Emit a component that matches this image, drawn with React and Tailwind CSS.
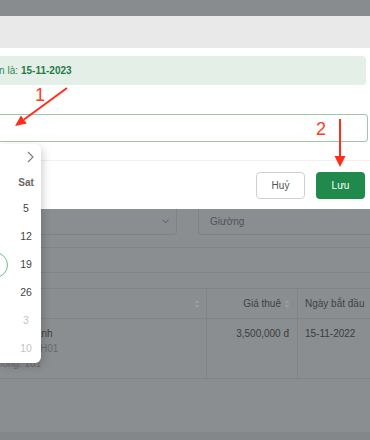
const days = [
  { d: "5", muted: false },
  { d: "12", muted: false },
  { d: "19", muted: false },
  { d: "26", muted: false },
  { d: "3", muted: true },
  { d: "10", muted: true },
];

function SortIcon() {
  return (
    <svg width="6" height="10" viewBox="0 0 6 10" className="shrink-0">
      <path d="M3 1 L5.5 4 H0.5 Z" fill="#9b9ea1" />
      <path d="M3 9 L5.5 6 H0.5 Z" fill="#9b9ea1" />
    </svg>
  );
}

function DatePopup() {
  return (
    <div className="absolute left-0 top-[144px] h-[219px] w-[41px] rounded-r-md bg-white shadow-[2px_3px_8px_rgba(0,0,0,0.18)]">
      <span className="absolute left-[-18px] top-[108px] h-[26px] w-[26px] rounded-full border border-[#6cbf86]" />
      <div className="flex h-[26px] items-center pl-[27px]">
        <svg width="7" height="12" viewBox="0 0 7 12">
          <path d="M1 1 L6 6 L1 11" fill="none" stroke="#777" strokeWidth="1.1" />
        </svg>
      </div>
      <div className="ml-[11px] w-[30px]">
        <div className="flex h-[25px] items-center justify-center text-[10px] font-bold text-[#666]">Sat</div>
        {days.map((x) => (
          <div
            key={x.d}
            className={`flex h-[28px] items-center justify-center text-[10.5px] ${x.muted ? "text-[#c4c4c4]" : "text-[#444]"}`}
          >
            {x.d}
          </div>
        ))}
      </div>
    </div>
  );
}

function Arrows() {
  return (
    <>
      <svg className="pointer-events-none absolute left-0 top-0" width="370" height="440">
        <line x1="67" y1="88" x2="24" y2="119.5" stroke="#ff2d1a" strokeWidth="2" />
        <polygon points="15,126 26.8,123.5 20.9,115.5" fill="#ff2d1a" />
        <line x1="340" y1="119" x2="340" y2="157" stroke="#ff2d1a" strokeWidth="2" />
        <polygon points="340,167 334.5,156 345.5,156" fill="#ff2d1a" />
      </svg>
      <span className="absolute left-[35px] top-[86px] text-[18px] leading-none text-[#ff3b26]">1</span>
      <span className="absolute left-[316px] top-[120px] text-[18px] leading-none text-[#ff3b26]">2</span>
    </>
  );
}

export default function App() {
  return (
    <div className="relative h-[440px] w-[370px] overflow-hidden bg-[#8b8e91] font-['Liberation_Sans',Arial,sans-serif]">
      <div className="h-4 bg-[#898c8f]" />

      {/* modal */}
      <div className="bg-white">
        <div className="h-8 bg-[#e9e9e9]" />
        <div className="pt-2 pb-[18px]">
          <div className="mr-[4px] flex h-[29px] items-center rounded-r bg-[#e4efe8] text-[10px] text-[#2f8753]">
            <div className="flex w-[18px] shrink-0 justify-end">
              <span className="shrink-0 whitespace-nowrap font-medium">Ngày bắt đầu hợp đồng gia hạn là:</span>
            </div>
            <span className="ml-[3px] font-bold text-[#1f7a46]">15-11-2023</span>
          </div>
          <div className="mr-[2px] mt-[29px] h-[28px] rounded-r border border-l-0 border-[#9ccaa9]" />
        </div>
        <div className="flex justify-end gap-[11px] border-t border-[#f0f0f0] pt-[11px] pb-[10px] pr-[5px]">
          <button className="h-[27px] w-[49px] rounded border border-[#cfcfcf] bg-white text-[10px] text-[#555]">Huỷ</button>
          <button className="h-[27px] w-[49px] rounded bg-[#1f8a4c] text-[10px] text-white">Lưu</button>
        </div>
      </div>

      {/* page under the mask */}
      <div className="flex h-[26px] gap-[21px]">
        <div className="flex w-[177px] items-center justify-end rounded-br border-b border-r border-[#7f8285] pr-[7px]">
          <svg width="7" height="5" viewBox="0 0 7 5">
            <path d="M0.5 0.8 L3.5 3.8 L6.5 0.8" fill="none" stroke="#555" strokeWidth="1" />
          </svg>
        </div>
        <div className="flex flex-1 items-center rounded-bl border-b border-l border-[#7f8285] pl-[11px] text-[10px] text-[#505356]">
          Giường
        </div>
      </div>
      <div className="mt-[12px] h-[25px] border-t border-[#818487]" />
      <div className="h-[16px] border-t border-[#818487]" />
      <div className="flex h-[31px] border-y border-[#818487] text-[10px] text-[#3f4143]">
        <div className="flex w-[207px] items-center justify-end border-r border-[#818487] pr-[6px]">
          <SortIcon />
        </div>
        <div className="flex w-[91px] items-center justify-end gap-[3px] border-r border-[#818487] pr-[7px]">
          Giá thuê
          <SortIcon />
        </div>
        <div className="flex flex-1 items-center pl-[7px] whitespace-nowrap">Ngày bắt đầu</div>
      </div>
      <div className="flex h-[60px] border-b border-[#818487] text-[10px] text-[#3a3c3e]">
        <div className="w-[207px] border-r border-[#818487] pt-[8px]">
          <div className="-ml-[10px] flex flex-col gap-[2px] leading-[13px]">
            <span className="font-medium">Lê Văn Thanh</span>
            <span className="text-[#686b6e]">Mã phòng: H01</span>
            <span className="text-[#686b6e]">Phòng: 101</span>
          </div>
        </div>
        <div className="w-[91px] border-r border-[#818487] pt-[8px] pr-[8px] text-right leading-[13px]">3,500,000 đ</div>
        <div className="flex-1 pt-[8px] pl-[7px] leading-[13px]">15-11-2022</div>
      </div>
      <div className="h-[53px]" />
      <div className="h-[8px] bg-[#84878a]" />

      <DatePopup />
      <Arrows />
    </div>
  );
}
